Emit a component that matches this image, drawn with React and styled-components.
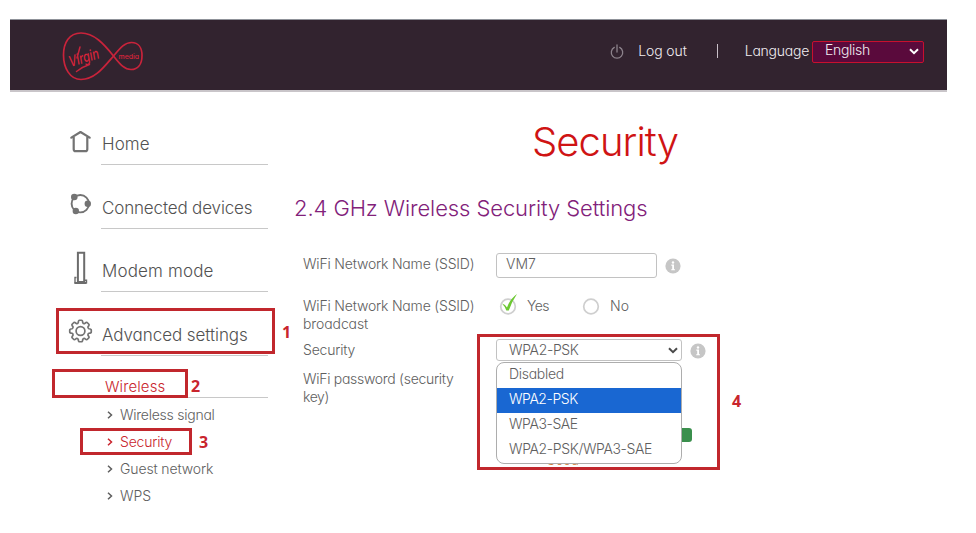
import React from "react";
import styled, { createGlobalStyle } from "styled-components";

const GlobalStyle = createGlobalStyle`
  * { box-sizing: border-box; }
  body {
    margin: 0;
    background: #fff;
    color: #5e5e5e;
    font-family: Inter, "Liberation Sans", sans-serif;
    font-feature-settings: "cv11";
    font-size: 14px;
    line-height: 18px;
    font-weight: 350;
  }
`;

const Page = styled.div`
  position: relative;
  width: 976px;
  height: 533px;
  padding: 19px 29px 0 10px;
  overflow: hidden;
`;

const Header = styled.header`
  height: 73px;
  display: flex;
  align-items: center;
  justify-content: space-between;
  padding: 0 23px 0 51px;
  background: #32232f;
  border-top: 1px solid #8f9299;
  border-bottom: 2px solid #c9c5c9;
`;

const Logo = styled.svg`
  width: 84px;
  height: 52px;
  display: block;
`;

const LogoWord = styled.text`
  fill: #d9233b;
  stroke: none;
  font-family: Inter, sans-serif;
  font-size: ${(p) => p.$size}px;
  font-style: ${(p) => (p.$slanted ? "italic" : "normal")};
  font-weight: 500;
`;

const HeaderTools = styled.div`
  display: flex;
  align-items: center;
  height: 22px;
  margin-bottom: 9px;
  color: #f1edf1;
`;

const PowerIcon = styled.svg`
  width: 14px;
  height: 16px;
  margin: 2px 14px 0 0;
`;

const Label = styled.span`
  white-space: nowrap;
  letter-spacing: ${(p) => p.$track || 0}px;
`;

const Divider = styled.span`
  width: 1px;
  height: 14px;
  margin: 0 27px 0 30px;
  background: #c9c0c9;
`;

const LanguageSelect = styled.div`
  width: 112px;
  height: 22px;
  margin: 2px 0 0 3px;
  padding: 0 4px 3px 12px;
  display: flex;
  align-items: center;
  justify-content: space-between;
  border: 1px solid #c8102e;
  border-radius: 2px;
  background: #5a0a3c;
`;

const Caret = styled.svg`
  width: 10px;
  height: 7px;
  flex: none;
  margin-top: ${(p) => p.$top || 0}px;
`;

const Body = styled.div`
  display: flex;
`;

const Sidebar = styled.nav`
  width: 284px;
  padding: 9px 0 0 57px;
`;

const NavItem = styled.div`
  height: ${(p) => p.$height || 64}px;
  display: grid;
  grid-template-columns: 27px 1fr;
  column-gap: 7px;
  padding-right: 26px;
`;

const NavIcon = styled.svg`
  width: 27px;
  height: 36px;
  align-self: end;
  margin-bottom: 7px;
`;

const NavLabel = styled.div`
  display: flex;
  align-items: flex-end;
  padding: 0 0 10px 1px;
  border-bottom: 1px solid #c8c8c8;
  font-size: 17px;
  line-height: 20px;
  font-weight: 300;
  color: #525252;
`;

const Section = styled.div`
  height: 42px;
  margin: 0 26px 0 34px;
  padding: 21px 0 0 4px;
  border-bottom: 1px solid #c8c8c8;
  font-size: 15px;
  line-height: 20px;
  color: #c9252d;
`;

const SubItem = styled.div`
  height: 27px;
  margin-left: 40px;
  display: flex;
  align-items: center;
  gap: 7px;
  color: ${(p) => (p.$active ? "#c9252d" : "#5e5e5e")};
`;

const SubList = styled.div`
  padding-top: 3px;
`;

const Chevron = styled.svg`
  width: 6px;
  height: 8px;
`;

const Main = styled.main`
  width: 622px;
`;

const Title = styled.h1`
  margin: 0;
  padding-top: 26px;
  height: 100px;
  text-align: center;
  font-size: 40px;
  line-height: 48px;
  font-weight: 300;
  letter-spacing: -0.95px;
  color: #cf1414;
`;

const SubTitle = styled.h2`
  margin: 0;
  height: 61px;
  font-size: 22px;
  line-height: 32px;
  font-weight: 300;
  letter-spacing: -0.09px;
  color: #82217a;
`;

const FieldRow = styled.div`
  height: ${(p) => p.$height}px;
  display: grid;
  grid-template-columns: 193px 1fr;
  padding-left: 9px;
`;

const FieldLabel = styled.div`
  padding-top: ${(p) => p.$top || 0}px;
  display: flex;
  flex-direction: column;
`;

const Controls = styled.div`
  display: flex;
  align-items: flex-start;
`;

const TextInput = styled.div`
  width: 161px;
  height: 25px;
  padding: 1px 9px;
  border: 1px solid #c2c2c2;
  border-radius: 3px;
`;

const Info = styled.svg`
  width: 16px;
  height: 16px;
  margin: ${(p) => p.$top}px 0 0 8px;
`;

const Radio = styled.div`
  display: flex;
  align-items: flex-start;
  width: 83px;
  padding-left: 2px;
`;

const RadioMark = styled.svg`
  width: 20px;
  height: 22px;
  margin-right: 9px;
  margin-top: -4px;
`;

const SelectWrap = styled.div`
  position: relative;
`;

const Select = styled.div`
  width: 186px;
  height: 22px;
  padding: 0 3px 0 12px;
  display: flex;
  align-items: center;
  justify-content: space-between;
  border: 1px solid #c2c2c2;
  border-radius: 3px;
`;

const Menu = styled.div`
  position: absolute;
  z-index: 2;
  top: 23px;
  left: 0;
  width: 186px;
  height: 102px;
  overflow: hidden;
  background: #fff;
  border: 1px solid #adadad;
  border-radius: 8px;
`;

const Option = styled.div`
  height: 25px;
  padding-left: 12px;
  line-height: 22px;
  color: ${(p) => (p.$selected ? "#fff" : "#5e5e5e")};
  background: ${(p) => (p.$selected ? "#1967d2" : "transparent")};
`;

const Strength = styled.div`
  width: 196px;
  padding-top: 58px;
`;

const StrengthBar = styled.div`
  height: 14px;
  border-radius: 3px;
  background: #3a8f4d;
`;

const StrengthText = styled.div`
  padding: 9px 0 0 50px;
  font-size: 13px;
  color: #d07a35;
`;

const Callout = styled.div`
  position: absolute;
  z-index: 3;
  left: ${(p) => p.$x}px;
  top: ${(p) => p.$y}px;
  width: ${(p) => p.$w}px;
  height: ${(p) => p.$h}px;
  border: 3px solid #c1272d;
`;

const CalloutNumber = styled.span`
  position: absolute;
  z-index: 3;
  left: ${(p) => p.$x}px;
  top: ${(p) => p.$y}px;
  font: 700 16px/20px "Open Sans", sans-serif;
  color: #c9252d;
`;

const CaretDown = ({ color, top }) => (
  <Caret $top={top} viewBox="0 0 10 7">
    <path d="M1 1.3 5 5.2 9 1.3" fill="none" stroke={color} strokeWidth="2" />
  </Caret>
);

const InfoIcon = ({ top }) => (
  <Info $top={top} viewBox="0 0 16 16">
    <circle cx="8" cy="8" r="7.6" fill="#c6c6c6" />
    <path d="M6.3 6.6H9v4.6h1v1.1H6.2v-1.1h1V7.7h-.9z" fill="#fff" />
    <circle cx="8" cy="4.5" r="1.2" fill="#fff" />
  </Info>
);

const HomeIcon = () => (
  <NavIcon viewBox="0 0 27 36" fill="none" stroke="#737373" strokeWidth="2.2" strokeLinejoin="round" strokeLinecap="round">
    <path d="M4.3 15.6 13.5 10l9.2 5.6M6.7 15v12.2q0 2 2 2h9.6q2 0 2-2V15" />
  </NavIcon>
);

const DevicesIcon = () => (
  <NavIcon viewBox="0 0 27 36">
    <circle cx="13.3" cy="17.7" r="8.7" fill="none" stroke="#737373" strokeWidth="1.9" />
    <circle cx="7.3" cy="11" r="3.3" fill="#737373" />
    <circle cx="20.8" cy="17.7" r="3.2" fill="#737373" />
    <circle cx="8.8" cy="25" r="3.2" fill="#737373" />
  </NavIcon>
);

const ModemIcon = () => (
  <NavIcon viewBox="0 0 27 36" fill="none" stroke="#6c6c6c">
    <path d="M10.9 33V3.8h6.3V33z" strokeWidth="2" />
    <path d="M9.5 28.5H8v5.3h11.5v-2.6H18" strokeWidth="1.4" />
    <path d="M7.5 34h12" strokeWidth="2" />
  </NavIcon>
);

const GearIcon = () => {
  const pts = Array.from({ length: 8 }, (_, i) => {
    const at = (deg, r) => {
      const a = ((i * 45 + deg) * Math.PI) / 180;
      return `${(13.5 + r * Math.sin(a)).toFixed(2)} ${(18 - r * Math.cos(a)).toFixed(2)}`;
    };
    return `${i ? "L" : "M"}${at(-15, 8.7)} Q${at(-11, 11)} ${at(-5, 10.8)} L${at(5, 10.8)} Q${at(11, 11)} ${at(15, 8.7)} Q${at(22.5, 7.6)} ${at(30, 8.7)}`;
  }).join(" ");
  return (
    <NavIcon viewBox="0 0 27 36" fill="none" stroke="#737373" strokeWidth="1.7" strokeLinejoin="round">
      <path d={`${pts}Z`} />
      <circle cx="13.5" cy="18" r="4.4" />
    </NavIcon>
  );
};

const NAV = [
  { text: "Home", icon: HomeIcon, track: 0.1 },
  { text: "Connected devices", icon: DevicesIcon, track: -0.15 },
  { text: "Modem mode", icon: ModemIcon, track: 0.15, height: 63 },
  { text: "Advanced settings", icon: GearIcon, track: -0.06 },
];

const SUB = [
  { text: "Wireless signal", track: -0.25 },
  { text: "Security", track: -0.2, active: true },
  { text: "Guest network", track: -0.13 },
  { text: "WPS", track: 0 },
];

const OPTIONS = [
  { text: "Disabled", track: -0.3 },
  { text: "WPA2-PSK", track: -0.45, selected: true },
  { text: "WPA3-SAE", track: -0.42 },
  { text: "WPA2-PSK/WPA3-SAE", track: -0.37 },
];

export default function App() {
  return (
    <Page>
      <GlobalStyle />
      <Header>
        <Logo viewBox="0 0 84 52" fill="none" stroke="#c9233b">
          <path
            d="M52.5 27C43 15 33 4 20 4C8 4 2.500 14 2.500 26C2.500 39 9 50.500 20 50.500C34 50.500 43 38 52.500 27C60 18 64 13.500 70.500 13.500C77.500 13.500 81 19 81 26.500C81 35 77 40.500 70 40.500C63 40.500 59 35 52.500 27Z"
            strokeWidth="1.7"
          />
          <LogoWord $size={6.5} x="57.5" y="29.5" textLength="20.5" lengthAdjust="spacingAndGlyphs">media</LogoWord>
          <LogoWord
            $size={13}
            $slanted
            textLength="31"
            lengthAdjust="spacingAndGlyphs"
            transform="translate(9.5 38) rotate(-17) scale(1 1.15)"
          >
            Virgin
          </LogoWord>
          <path d="M16 29 19 18M15.500 42.500Q22 37.500 28.500 35.500" strokeWidth="1.5" strokeLinecap="round" />
        </Logo>
        <HeaderTools>
          <PowerIcon viewBox="0 0 14 16" fill="none" stroke="#8d838c" strokeWidth="1.3" strokeLinecap="round">
            <path d="M7 1v7M4.300 3.400a5.700 5.700 0 1 0 5.400 0" />
          </PowerIcon>
          <Label $track={-0.1}>Log out</Label>
          <Divider />
          <Label $track={-0.25}>Language</Label>
          <LanguageSelect>
            <Label $track={-0.3}>English</Label>
            <CaretDown color="#fff" top={3} />
          </LanguageSelect>
        </HeaderTools>
      </Header>

      <Body>
        <Sidebar>
          {NAV.map(({ text, icon: Icon, track, height }) => (
            <NavItem key={text} $height={height}>
              <Icon />
              <NavLabel>
                <Label $track={track}>{text}</Label>
              </NavLabel>
            </NavItem>
          ))}
          <Section>
            <Label $track={0.1}>Wireless</Label>
          </Section>
          <SubList>
            {SUB.map(({ text, track, active }) => (
              <SubItem key={text} $active={active}>
                <Chevron viewBox="0 0 6 8" fill="none" stroke="currentColor" strokeWidth="1.5">
                  <path d="M1 .7 4.500 4 1 7.300" />
                </Chevron>
                <Label $track={track}>{text}</Label>
              </SubItem>
            ))}
          </SubList>
        </Sidebar>

        <Main>
          <Title>Security</Title>
          <SubTitle>2.4 GHz Wireless Security Settings</SubTitle>

          <FieldRow $height={44}>
            <FieldLabel $top={2}>
              <Label $track={-0.19}>WiFi Network Name (SSID)</Label>
            </FieldLabel>
            <Controls>
              <TextInput>
                <Label>VM7</Label>
              </TextInput>
              <InfoIcon top={5} />
            </Controls>
          </FieldRow>

          <FieldRow $height={42}>
            <FieldLabel>
              <Label $track={-0.19}>WiFi Network Name (SSID)</Label>
              <Label $track={-0.1}>broadcast</Label>
            </FieldLabel>
            <Controls>
              <Radio>
                <RadioMark viewBox="0 0 20 22">
                  <circle cx="10" cy="13.5" r="7.3" fill="#fff" stroke="#cfcfcf" strokeWidth="1.7" />
                  <path d="M4 10.500Q7.500 11.500 9 14.500Q12 6 19 1Q13.500 9 10.800 17.500H8.300Q7 13.500 4 10.500Z" fill="#6cc832" />
                </RadioMark>
                <Label $track={-0.5}>Yes</Label>
              </Radio>
              <Radio>
                <RadioMark viewBox="0 0 20 22">
                  <circle cx="10" cy="13.5" r="7.3" fill="#fff" stroke="#cfcfcf" strokeWidth="1.7" />
                </RadioMark>
                <Label>No</Label>
              </Radio>
            </Controls>
          </FieldRow>

          <FieldRow $height={31}>
            <FieldLabel $top={2}>
              <Label $track={-0.2}>Security</Label>
            </FieldLabel>
            <Controls>
              <SelectWrap>
                <Select>
                  <Label $track={-0.35}>WPA2-PSK</Label>
                  <CaretDown color="#4a4a4a" />
                </Select>
                <Menu>
                  {OPTIONS.map(({ text, track, selected }) => (
                    <Option key={text} $selected={selected}>
                      <Label $track={track}>{text}</Label>
                    </Option>
                  ))}
                </Menu>
              </SelectWrap>
              <InfoIcon top={4} />
            </Controls>
          </FieldRow>

          <FieldRow $height={100}>
            <FieldLabel>
              <Label $track={-0.29}>WiFi password (security</Label>
              <Label $track={-0.4}>key)</Label>
            </FieldLabel>
            <Strength>
              <StrengthBar />
              <StrengthText>Good</StrengthText>
            </Strength>
          </FieldRow>
        </Main>
      </Body>

      <Callout $x={56} $y={308} $w={219} $h={46} />
      <Callout $x={52} $y={369} $w={136} $h={29} />
      <Callout $x={80} $y={428} $w={112} $h={27} />
      <Callout $x={477} $y={334} $w={243} $h={136} />
      <CalloutNumber $x={282} $y={322}>1</CalloutNumber>
      <CalloutNumber $x={191} $y={376}>2</CalloutNumber>
      <CalloutNumber $x={199} $y={432}>3</CalloutNumber>
      <CalloutNumber $x={732} $y={391}>4</CalloutNumber>
    </Page>
  );
}
